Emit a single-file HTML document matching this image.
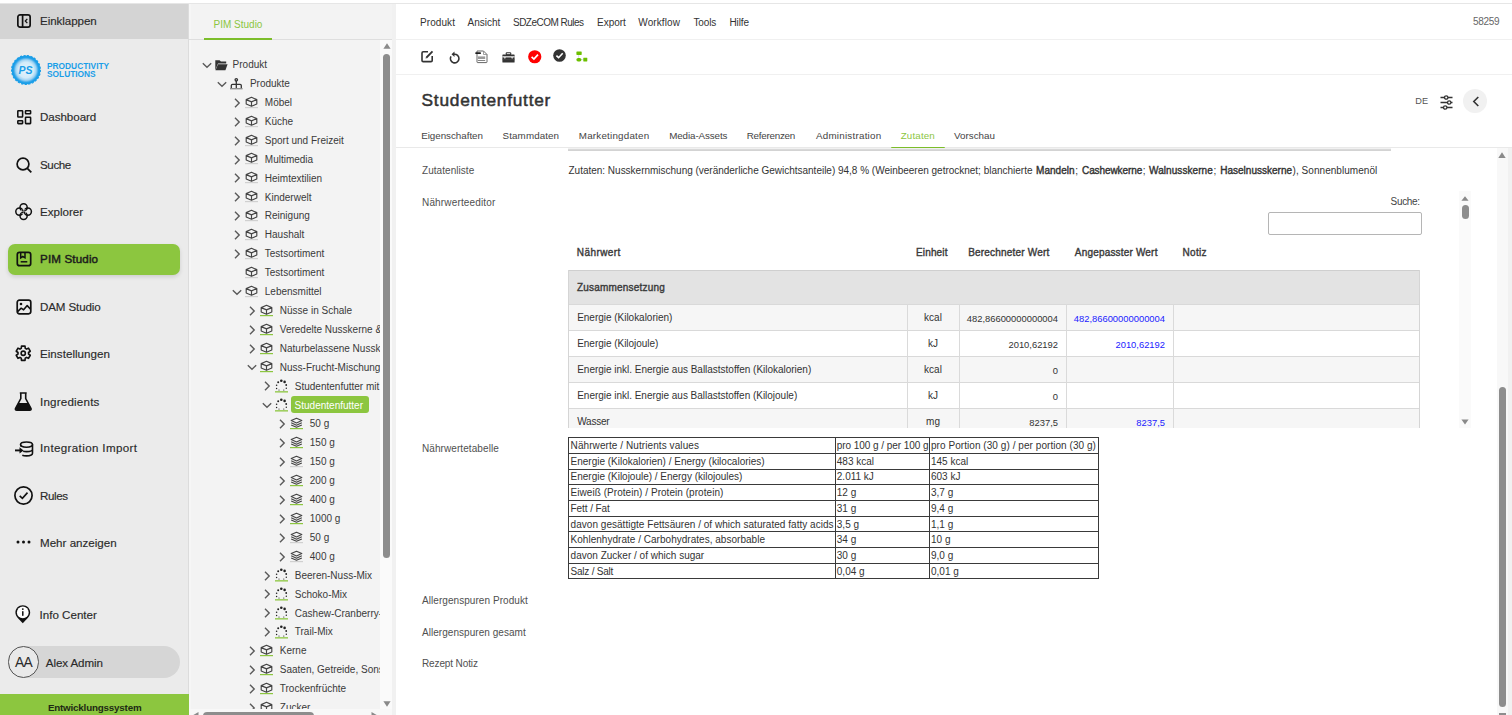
<!DOCTYPE html>
<html><head><meta charset="utf-8"><style>
html,body{margin:0;padding:0;width:1512px;height:715px;overflow:hidden;background:#fff;position:relative}
.t{position:absolute;white-space:nowrap;line-height:1;font-family:"Liberation Sans", sans-serif}
b{font-weight:bold}
svg{overflow:visible}
</style></head><body>
<div style="position:absolute;left:0px;top:0px;width:1512px;height:3px;background:#fff"></div><div style="position:absolute;left:0px;top:3px;width:1512px;height:1px;background:#e6e6e6"></div><div style="position:absolute;left:0px;top:4px;width:188px;height:711px;background:#ebebeb"></div><div style="position:absolute;left:188px;top:4px;width:1px;height:711px;background:#dcdcdc"></div><div style="position:absolute;left:0px;top:4px;width:188px;height:35px;background:#d4d4d4"></div><svg style="position:absolute;left:16.6px;top:14.1px" width="14" height="14" viewBox="0 0 14 14"><rect x="0.85" y="0.85" width="12.3" height="12.3" rx="2.2" fill="none" stroke="#111" stroke-width="1.7"/><line x1="5.6" y1="1" x2="5.6" y2="13" stroke="#111" stroke-width="1.7"/><path d="M10.3 4.9 L8.3 7 L10.3 9.1" fill="none" stroke="#111" stroke-width="1.3"/></svg><div class="t" style="left:40px;top:15.18px;font-size:11.6px;color:#2a2a2a;font-weight:normal;letter-spacing:-0.07px;-webkit-text-stroke:0.15px #2a2a2a">Einklappen</div><svg style="position:absolute;left:11px;top:55px" width="30" height="30" viewBox="0 0 30 30"><defs><radialGradient id="lg" cx="50%" cy="50%" r="50%"><stop offset="0%" stop-color="#e6f4fc"/><stop offset="55%" stop-color="#d2ebf9"/><stop offset="72%" stop-color="#9fd3f3"/><stop offset="85%" stop-color="#3aa9ea"/><stop offset="100%" stop-color="#1a9ee8"/></radialGradient></defs><circle cx="15" cy="15" r="14.2" fill="url(#lg)"/><circle cx="15" cy="15" r="14.4" fill="none" stroke="#1a9ee8" stroke-width="1.2" stroke-dasharray="2.2 1.4"/><circle cx="15" cy="15" r="13.4" fill="none" stroke="#1a9ee8" stroke-width="1.6"/><text x="14.6" y="18.8" text-anchor="middle" font-family="Liberation Sans" font-style="italic" font-weight="bold" font-size="10.5" fill="#1a9ee8">PS</text></svg><div class="t" style="left:46.8px;top:62.2px;font-size:9.6px;line-height:8px;font-weight:bold;color:#1a9ee8;transform:scaleX(0.87);transform-origin:0 0">PRODUCTIVITY<br>SOLUTIONS</div><div style="position:absolute;left:8px;top:243.5px;width:172px;height:31.5px;background:#8cc63f;border-radius:7px;box-shadow:0 2px 4px rgba(0,0,0,0.12)"></div><svg style="position:absolute;left:16.5px;top:110px" width="14.5" height="14.5" viewBox="0 0 14.5 14.5"><g fill="none" stroke="#111" stroke-width="1.55"><rect x="0.8" y="0.8" width="4.8" height="6.2" rx="0.5"/><rect x="8.5" y="0.8" width="5.1" height="3" rx="0.5"/><rect x="0.8" y="10.7" width="4.8" height="2.9" rx="0.5"/><rect x="8.5" y="7.3" width="5.1" height="6.3" rx="0.5"/></g></svg><div class="t" style="left:40px;top:111.18px;font-size:11.6px;color:#2a2a2a;font-weight:normal;letter-spacing:-0.05px;-webkit-text-stroke:0.15px #2a2a2a">Dashboard</div><svg style="position:absolute;left:15.5px;top:156.5px" width="17" height="17" viewBox="0 0 17 17"><circle cx="7" cy="7" r="5.9" fill="none" stroke="#111" stroke-width="1.7"/><line x1="11.3" y1="11.3" x2="15.3" y2="15.3" stroke="#111" stroke-width="1.8"/></svg><div class="t" style="left:40px;top:158.58px;font-size:11.6px;color:#2a2a2a;font-weight:normal;letter-spacing:-0.4px;-webkit-text-stroke:0.15px #2a2a2a">Suche</div><svg style="position:absolute;left:15px;top:203px" width="17" height="17" viewBox="0 0 17 17"><g fill="none" stroke-width="1.5"><circle cx="8.6" cy="4.3999999999999995" r="3.6" stroke="#111"/><circle cx="12.8" cy="8.6" r="3.6" stroke="#111"/><circle cx="8.6" cy="12.8" r="3.6" stroke="#111"/><circle cx="4.3999999999999995" cy="8.6" r="3.6" stroke="#111"/><path d="M8.60 8.00 A3.6 3.6 0 0 0 10.82 7.24" stroke="#ebebeb" stroke-width="2.6"/><path d="M8.60 8.00 A3.6 3.6 0 0 0 10.82 7.24" stroke="#111"/><path d="M9.20 8.60 A3.6 3.6 0 0 0 9.96 10.82" stroke="#ebebeb" stroke-width="2.6"/><path d="M9.20 8.60 A3.6 3.6 0 0 0 9.96 10.82" stroke="#111"/><path d="M8.60 9.20 A3.6 3.6 0 0 0 6.38 9.96" stroke="#ebebeb" stroke-width="2.6"/><path d="M8.60 9.20 A3.6 3.6 0 0 0 6.38 9.96" stroke="#111"/><path d="M8.00 8.60 A3.6 3.6 0 0 0 7.24 6.38" stroke="#ebebeb" stroke-width="2.6"/><path d="M8.00 8.60 A3.6 3.6 0 0 0 7.24 6.38" stroke="#111"/></g></svg><div class="t" style="left:40px;top:205.98px;font-size:11.6px;color:#2a2a2a;font-weight:normal;letter-spacing:0px;-webkit-text-stroke:0.15px #2a2a2a">Explorer</div><svg style="position:absolute;left:15.6px;top:251.3px" width="15.4" height="15.4" viewBox="0 0 15.4 15.4"><rect x="1.3" y="1.3" width="13.4" height="13.4" rx="2.3" fill="none" stroke="#111" stroke-width="1.7"/><path d="M4.7 1.5 V6.8 L6.8 5.5 L9 6.8 V1.5" fill="none" stroke="#111" stroke-width="1.5"/><line x1="4.7" y1="10.8" x2="11.3" y2="10.8" stroke="#111" stroke-width="1.5"/></svg><div class="t" style="left:40px;top:253.38px;font-size:11.6px;color:#1c1c1c;font-weight:normal;letter-spacing:0.15px;-webkit-text-stroke:0.45px #1c1c1c">PIM Studio</div><svg style="position:absolute;left:15.5px;top:298.5px" width="16" height="16" viewBox="0 0 16 16"><rect x="1.2" y="1.2" width="13.6" height="13.6" rx="2.2" fill="none" stroke="#111" stroke-width="1.7"/><circle cx="5" cy="5" r="1.3" fill="#111"/><path d="M1.6 12.6 L5.2 9.2 L7.6 10.8 L11.2 6.6 L14.6 10.2" fill="none" stroke="#111" stroke-width="1.6" stroke-linejoin="round"/></svg><div class="t" style="left:40px;top:300.78px;font-size:11.6px;color:#2a2a2a;font-weight:normal;letter-spacing:-0.12px;-webkit-text-stroke:0.15px #2a2a2a">DAM Studio</div><svg style="position:absolute;left:15.4px;top:345.3px" width="16.5" height="16.5" viewBox="0 0 16.5 16.5"><path d="M6.26 3.34 L6.48 1.17 L10.02 1.17 L10.24 3.34 L11.51 4.07 L13.50 3.18 L15.27 6.24 L13.50 7.51 L13.50 8.99 L15.27 10.26 L13.50 13.32 L11.51 12.43 L10.24 13.16 L10.02 15.33 L6.48 15.33 L6.26 13.16 L4.99 12.43 L3.00 13.32 L1.23 10.26 L3.00 8.99 L3.00 7.51 L1.23 6.24 L3.00 3.18 L4.99 4.07 Z" fill="none" stroke="#111" stroke-width="1.6" stroke-linejoin="round"/><circle cx="8.25" cy="8.25" r="2.1" fill="none" stroke="#111" stroke-width="1.6"/></svg><div class="t" style="left:40px;top:348.18px;font-size:11.6px;color:#2a2a2a;font-weight:normal;letter-spacing:0.03px;-webkit-text-stroke:0.15px #2a2a2a">Einstellungen</div><svg style="position:absolute;left:14.4px;top:391.5px" width="18.5" height="19" viewBox="0 0 18.5 19"><path d="M5.8 1 H12.7 M6.8 1 V6.5 L1.5 16.5 Q1 18.2 2.8 18.2 H15.7 Q17.5 18.2 17 16.5 L11.7 6.5 V1" fill="none" stroke="#111" stroke-width="1.6"/><path d="M4.3 11 H14.2 L17 16.6 Q17.4 18 15.7 18 H2.8 Q1.1 18 1.5 16.6 Z" fill="#111"/></svg><div class="t" style="left:40px;top:395.58px;font-size:11.6px;color:#2a2a2a;font-weight:normal;letter-spacing:0.2px;-webkit-text-stroke:0.15px #2a2a2a">Ingredients</div><svg style="position:absolute;left:13.9px;top:441px" width="19.6" height="16" viewBox="0 0 19.6 16"><ellipse cx="12.5" cy="3.6" rx="6" ry="2.6" fill="none" stroke="#111" stroke-width="1.6"/><path d="M18.5 3.6 V12.3 Q18.5 14.9 12.5 14.9 Q9.8 14.9 8.3 14.3 M18.5 8.2 Q18.5 10.5 12.5 10.6 Q10.2 10.6 9.2 10.2 M6.8 3.8 V5.5" fill="none" stroke="#111" stroke-width="1.6"/><path d="M1 9.4 H6" stroke="#111" stroke-width="1.9"/><path d="M5.5 6.2 L9.6 9.4 L5.5 12.6 Z" fill="#111"/></svg><div class="t" style="left:40px;top:442.38px;font-size:11.6px;color:#2a2a2a;font-weight:normal;letter-spacing:0.36px;-webkit-text-stroke:0.15px #2a2a2a">Integration Import</div><svg style="position:absolute;left:13.9px;top:486px" width="19" height="19" viewBox="0 0 19 19"><circle cx="9.5" cy="9.5" r="8.6" fill="none" stroke="#111" stroke-width="1.7"/><path d="M5.7 9.8 L8.4 12.4 L13.5 6.6" fill="none" stroke="#111" stroke-width="1.6"/></svg><div class="t" style="left:40px;top:490.38px;font-size:11.6px;color:#2a2a2a;font-weight:normal;letter-spacing:-0.4px;-webkit-text-stroke:0.15px #2a2a2a">Rules</div><svg style="position:absolute;left:15.5px;top:534px" width="16" height="16" viewBox="0 0 16 16"><circle cx="2" cy="8" r="1.5" fill="#111"/><circle cx="7.5" cy="8" r="1.5" fill="#111"/><circle cx="13" cy="8" r="1.5" fill="#111"/></svg><div class="t" style="left:40px;top:537.18px;font-size:11.6px;color:#2a2a2a;font-weight:normal;letter-spacing:0px;-webkit-text-stroke:0.15px #2a2a2a">Mehr anzeigen</div><svg style="position:absolute;left:15.4px;top:605.4px" width="15.6" height="18.4" viewBox="0 0 15.6 18.4"><path d="M7.8 0.3 C3.6 0.3 0.4 3.5 0.4 7.5 C0.4 11.3 3.8 13.9 7.8 18.2 C11.8 13.9 15.2 11.3 15.2 7.5 C15.2 3.5 12 0.3 7.8 0.3 Z" fill="#111"/><circle cx="7.8" cy="7.4" r="5.9" fill="#fff"/><rect x="7.05" y="6" width="1.5" height="5" rx="0.75" fill="#111"/><circle cx="7.8" cy="4.1" r="0.95" fill="#111"/></svg><div class="t" style="left:39.5px;top:608.78px;font-size:11.6px;color:#2a2a2a;font-weight:normal;-webkit-text-stroke:0.15px #2a2a2a">Info Center</div><div style="position:absolute;left:8px;top:646px;width:172px;height:32px;background:#d6d6d6;border-radius:16px"></div><div style="position:absolute;left:7.8px;top:646.3px;width:31.5px;height:31.5px;box-sizing:border-box;border:1.2px solid #555;border-radius:50%;background:#e9e9e9"></div><div class="t" style="left:-176.4px;width:400px;text-align:center;top:655.72px;font-size:13.8px;color:#2a2a2a;font-weight:normal;letter-spacing:-0.6px">AA</div><div class="t" style="left:45.8px;top:656.78px;font-size:11.6px;color:#2a2a2a;font-weight:normal;letter-spacing:-0.1px;-webkit-text-stroke:0.15px #2a2a2a">Alex Admin</div><div style="position:absolute;left:0px;top:693.5px;width:189px;height:21.5px;background:#8cc63f"></div><div class="t" style="left:47.9px;top:702.90px;font-size:9.8px;color:#1e2a14;font-weight:bold;letter-spacing:-0.186px;">Entwicklungssystem</div><div style="position:absolute;left:189px;top:4px;width:203px;height:711px;background:#f3f3f3"></div><div style="position:absolute;left:189px;top:4px;width:2px;height:711px;background:#f6f6f6"></div><div style="position:absolute;left:392px;top:4px;width:4px;height:711px;background:#f1f1f1"></div><div class="t" style="left:213.5px;top:20.14px;font-size:10px;color:#8cc63f;font-weight:normal;">PIM Studio</div><div style="position:absolute;left:189px;top:39px;width:203px;height:1px;background:#dedede"></div><div style="position:absolute;left:204px;top:38px;width:67.5px;height:2px;background:#7cbd2a"></div><div style="position:absolute;left:380px;top:40px;width:12px;height:669px;background:#fafafa"></div><svg style="position:absolute;left:382.5px;top:43px" width="8" height="6" viewBox="0 0 8 6"><path d="M4 0.3 L7.6 5.7 H0.4 Z" fill="#8a8a8a"/></svg><div style="position:absolute;left:382.7px;top:53.5px;width:7.3px;height:504px;background:#8d8d8d;border-radius:4px"></div><svg style="position:absolute;left:382.5px;top:701px" width="8" height="6" viewBox="0 0 8 6"><path d="M0.4 0.3 H7.6 L4 5.7 Z" fill="#8a8a8a"/></svg><div style="position:absolute;left:189px;top:709px;width:203px;height:6px;background:#f8f8f8"></div><div style="position:absolute;left:203.3px;top:712px;width:111px;height:8px;background:#8d8d8d;border-radius:4px"></div><svg style="position:absolute;left:193px;top:710px" width="6" height="6" viewBox="0 0 6 6"><path d="M0.3 5 L5.5 2 V8 Z" fill="#8a8a8a"/></svg><svg style="position:absolute;left:371px;top:710px" width="6" height="6" viewBox="0 0 6 6"><path d="M5.7 5 L0.5 2 V8 Z" fill="#8a8a8a"/></svg><div style="position:absolute;left:189px;top:40px;width:191px;height:669px;overflow:hidden"><div style="position:absolute;left:0;top:-40px;width:400px;height:800px"><svg style="position:absolute;left:13.300000000000011px;top:61.79999999999999px" width="10" height="6.5" viewBox="0 0 10 6.5"><path d="M0.8 1.2 L5 5.2 L9.2 1.2" fill="none" stroke="#5a5a5a" stroke-width="1.4"/></svg><svg style="position:absolute;left:25.900000000000006px;top:58.89999999999999px" width="14" height="12" viewBox="0 0 14 12"><path d="M0.3 1.2 H4.6 L5.9 2.6 H11.2 V4.6 H3 L0.3 11.2 Z" fill="#333"/><path d="M3 5.2 H12.6 L10.4 11.2 H0.5 Z" fill="#333"/></svg><div class="t" style="left:43.599999999999994px;top:60.13px;font-size:10px;color:#3a3a3a;font-weight:normal;">Produkt</div><svg style="position:absolute;left:28.30000000000001px;top:80.71px" width="10" height="6.5" viewBox="0 0 10 6.5"><path d="M0.8 1.2 L5 5.2 L9.2 1.2" fill="none" stroke="#5a5a5a" stroke-width="1.4"/></svg><svg style="position:absolute;left:40.900000000000006px;top:77.60999999999999px" width="13" height="12" viewBox="0 0 13 12"><g fill="none" stroke="#333" stroke-width="1.3"><circle cx="6.3" cy="1.8" r="1.2"/><path d="M6.3 3 V10 M1.3 10 V7.6 Q1.3 6.4 2.5 6.4 H10.1 Q11.3 6.4 11.3 7.6 V10"/></g><rect x="0" y="10.2" width="12.6" height="1.1" fill="#777"/></svg><div class="t" style="left:60.900000000000006px;top:79.04px;font-size:10px;color:#3a3a3a;font-weight:normal;">Produkte</div><svg style="position:absolute;left:44.5px;top:97.81999999999998px" width="7" height="10" viewBox="0 0 7 10"><path d="M1 0.8 L5.2 5 L1 9.2" fill="none" stroke="#5a5a5a" stroke-width="1.4"/></svg><svg style="position:absolute;left:55.900000000000006px;top:95.71999999999998px" width="13" height="14" viewBox="0 0 13 14"><path d="M6.5 1.3 L11.8 3.6 V8 L6.5 10.3 L1.2 8 V3.6 Z M1.2 3.6 L6.5 5.9 L11.8 3.6 M6.5 5.9 V10.3" fill="none" stroke="#444" stroke-width="1.15" stroke-linejoin="round"/><rect x="0" y="11" width="13" height="1.2" fill="#d0d0d0"/></svg><div class="t" style="left:75.80000000000001px;top:97.95px;font-size:10px;color:#3a3a3a;font-weight:normal;">Möbel</div><svg style="position:absolute;left:44.5px;top:116.72999999999999px" width="7" height="10" viewBox="0 0 7 10"><path d="M1 0.8 L5.2 5 L1 9.2" fill="none" stroke="#5a5a5a" stroke-width="1.4"/></svg><svg style="position:absolute;left:55.900000000000006px;top:114.63px" width="13" height="14" viewBox="0 0 13 14"><path d="M6.5 1.3 L11.8 3.6 V8 L6.5 10.3 L1.2 8 V3.6 Z M1.2 3.6 L6.5 5.9 L11.8 3.6 M6.5 5.9 V10.3" fill="none" stroke="#444" stroke-width="1.15" stroke-linejoin="round"/><rect x="0" y="11" width="13" height="1.2" fill="#d0d0d0"/></svg><div class="t" style="left:75.80000000000001px;top:116.86px;font-size:10px;color:#3a3a3a;font-weight:normal;">Küche</div><svg style="position:absolute;left:44.5px;top:135.64000000000001px" width="7" height="10" viewBox="0 0 7 10"><path d="M1 0.8 L5.2 5 L1 9.2" fill="none" stroke="#5a5a5a" stroke-width="1.4"/></svg><svg style="position:absolute;left:55.900000000000006px;top:133.54000000000002px" width="13" height="14" viewBox="0 0 13 14"><path d="M6.5 1.3 L11.8 3.6 V8 L6.5 10.3 L1.2 8 V3.6 Z M1.2 3.6 L6.5 5.9 L11.8 3.6 M6.5 5.9 V10.3" fill="none" stroke="#444" stroke-width="1.15" stroke-linejoin="round"/><rect x="0" y="11" width="13" height="1.2" fill="#d0d0d0"/></svg><div class="t" style="left:75.80000000000001px;top:135.78px;font-size:10px;color:#3a3a3a;font-weight:normal;">Sport und Freizeit</div><svg style="position:absolute;left:44.5px;top:154.54999999999998px" width="7" height="10" viewBox="0 0 7 10"><path d="M1 0.8 L5.2 5 L1 9.2" fill="none" stroke="#5a5a5a" stroke-width="1.4"/></svg><svg style="position:absolute;left:55.900000000000006px;top:152.45px" width="13" height="14" viewBox="0 0 13 14"><path d="M6.5 1.3 L11.8 3.6 V8 L6.5 10.3 L1.2 8 V3.6 Z M1.2 3.6 L6.5 5.9 L11.8 3.6 M6.5 5.9 V10.3" fill="none" stroke="#444" stroke-width="1.15" stroke-linejoin="round"/><rect x="0" y="11" width="13" height="1.2" fill="#d0d0d0"/></svg><div class="t" style="left:75.80000000000001px;top:154.68px;font-size:10px;color:#3a3a3a;font-weight:normal;">Multimedia</div><svg style="position:absolute;left:44.5px;top:173.46px" width="7" height="10" viewBox="0 0 7 10"><path d="M1 0.8 L5.2 5 L1 9.2" fill="none" stroke="#5a5a5a" stroke-width="1.4"/></svg><svg style="position:absolute;left:55.900000000000006px;top:171.36px" width="13" height="14" viewBox="0 0 13 14"><path d="M6.5 1.3 L11.8 3.6 V8 L6.5 10.3 L1.2 8 V3.6 Z M1.2 3.6 L6.5 5.9 L11.8 3.6 M6.5 5.9 V10.3" fill="none" stroke="#444" stroke-width="1.15" stroke-linejoin="round"/><rect x="0" y="11" width="13" height="1.2" fill="#d0d0d0"/></svg><div class="t" style="left:75.80000000000001px;top:173.59px;font-size:10px;color:#3a3a3a;font-weight:normal;">Heimtextilien</div><svg style="position:absolute;left:44.5px;top:192.37px" width="7" height="10" viewBox="0 0 7 10"><path d="M1 0.8 L5.2 5 L1 9.2" fill="none" stroke="#5a5a5a" stroke-width="1.4"/></svg><svg style="position:absolute;left:55.900000000000006px;top:190.27px" width="13" height="14" viewBox="0 0 13 14"><path d="M6.5 1.3 L11.8 3.6 V8 L6.5 10.3 L1.2 8 V3.6 Z M1.2 3.6 L6.5 5.9 L11.8 3.6 M6.5 5.9 V10.3" fill="none" stroke="#444" stroke-width="1.15" stroke-linejoin="round"/><rect x="0" y="11" width="13" height="1.2" fill="#d0d0d0"/></svg><div class="t" style="left:75.80000000000001px;top:192.50px;font-size:10px;color:#3a3a3a;font-weight:normal;">Kinderwelt</div><svg style="position:absolute;left:44.5px;top:211.28px" width="7" height="10" viewBox="0 0 7 10"><path d="M1 0.8 L5.2 5 L1 9.2" fill="none" stroke="#5a5a5a" stroke-width="1.4"/></svg><svg style="position:absolute;left:55.900000000000006px;top:209.18px" width="13" height="14" viewBox="0 0 13 14"><path d="M6.5 1.3 L11.8 3.6 V8 L6.5 10.3 L1.2 8 V3.6 Z M1.2 3.6 L6.5 5.9 L11.8 3.6 M6.5 5.9 V10.3" fill="none" stroke="#444" stroke-width="1.15" stroke-linejoin="round"/><rect x="0" y="11" width="13" height="1.2" fill="#d0d0d0"/></svg><div class="t" style="left:75.80000000000001px;top:211.41px;font-size:10px;color:#3a3a3a;font-weight:normal;">Reinigung</div><svg style="position:absolute;left:44.5px;top:230.19px" width="7" height="10" viewBox="0 0 7 10"><path d="M1 0.8 L5.2 5 L1 9.2" fill="none" stroke="#5a5a5a" stroke-width="1.4"/></svg><svg style="position:absolute;left:55.900000000000006px;top:228.09px" width="13" height="14" viewBox="0 0 13 14"><path d="M6.5 1.3 L11.8 3.6 V8 L6.5 10.3 L1.2 8 V3.6 Z M1.2 3.6 L6.5 5.9 L11.8 3.6 M6.5 5.9 V10.3" fill="none" stroke="#444" stroke-width="1.15" stroke-linejoin="round"/><rect x="0" y="11" width="13" height="1.2" fill="#d0d0d0"/></svg><div class="t" style="left:75.80000000000001px;top:230.32px;font-size:10px;color:#3a3a3a;font-weight:normal;">Haushalt</div><svg style="position:absolute;left:44.5px;top:249.1px" width="7" height="10" viewBox="0 0 7 10"><path d="M1 0.8 L5.2 5 L1 9.2" fill="none" stroke="#5a5a5a" stroke-width="1.4"/></svg><svg style="position:absolute;left:55.900000000000006px;top:247.0px" width="13" height="14" viewBox="0 0 13 14"><path d="M6.5 1.3 L11.8 3.6 V8 L6.5 10.3 L1.2 8 V3.6 Z M1.2 3.6 L6.5 5.9 L11.8 3.6 M6.5 5.9 V10.3" fill="none" stroke="#444" stroke-width="1.15" stroke-linejoin="round"/><rect x="0" y="11" width="13" height="1.2" fill="#d0d0d0"/></svg><div class="t" style="left:75.80000000000001px;top:249.23px;font-size:10px;color:#3a3a3a;font-weight:normal;">Testsortiment</div><svg style="position:absolute;left:55.900000000000006px;top:265.91px" width="13" height="14" viewBox="0 0 13 14"><path d="M6.5 1.3 L11.8 3.6 V8 L6.5 10.3 L1.2 8 V3.6 Z M1.2 3.6 L6.5 5.9 L11.8 3.6 M6.5 5.9 V10.3" fill="none" stroke="#444" stroke-width="1.15" stroke-linejoin="round"/><rect x="0" y="11" width="13" height="1.2" fill="#d0d0d0"/></svg><div class="t" style="left:75.80000000000001px;top:268.15px;font-size:10px;color:#3a3a3a;font-weight:normal;">Testsortiment</div><svg style="position:absolute;left:43.30000000000001px;top:288.71999999999997px" width="10" height="6.5" viewBox="0 0 10 6.5"><path d="M0.8 1.2 L5 5.2 L9.2 1.2" fill="none" stroke="#5a5a5a" stroke-width="1.4"/></svg><svg style="position:absolute;left:55.900000000000006px;top:284.82px" width="13" height="14" viewBox="0 0 13 14"><path d="M6.5 1.3 L11.8 3.6 V8 L6.5 10.3 L1.2 8 V3.6 Z M1.2 3.6 L6.5 5.9 L11.8 3.6 M6.5 5.9 V10.3" fill="none" stroke="#444" stroke-width="1.15" stroke-linejoin="round"/><rect x="0" y="11" width="13" height="1.2" fill="#d0d0d0"/></svg><div class="t" style="left:75.80000000000001px;top:287.06px;font-size:10px;color:#3a3a3a;font-weight:normal;">Lebensmittel</div><svg style="position:absolute;left:59.5px;top:305.83000000000004px" width="7" height="10" viewBox="0 0 7 10"><path d="M1 0.8 L5.2 5 L1 9.2" fill="none" stroke="#5a5a5a" stroke-width="1.4"/></svg><svg style="position:absolute;left:70.90000000000003px;top:303.73px" width="13" height="14" viewBox="0 0 13 14"><path d="M6.5 1.3 L11.8 3.6 V8 L6.5 10.3 L1.2 8 V3.6 Z M1.2 3.6 L6.5 5.9 L11.8 3.6 M6.5 5.9 V10.3" fill="none" stroke="#444" stroke-width="1.15" stroke-linejoin="round"/><rect x="0" y="11" width="13" height="1.2" fill="#8cc63f"/></svg><div class="t" style="left:90.80000000000001px;top:305.97px;font-size:10px;color:#3a3a3a;font-weight:normal;">Nüsse in Schale</div><svg style="position:absolute;left:59.5px;top:324.74000000000007px" width="7" height="10" viewBox="0 0 7 10"><path d="M1 0.8 L5.2 5 L1 9.2" fill="none" stroke="#5a5a5a" stroke-width="1.4"/></svg><svg style="position:absolute;left:70.90000000000003px;top:322.64000000000004px" width="13" height="14" viewBox="0 0 13 14"><path d="M6.5 1.3 L11.8 3.6 V8 L6.5 10.3 L1.2 8 V3.6 Z M1.2 3.6 L6.5 5.9 L11.8 3.6 M6.5 5.9 V10.3" fill="none" stroke="#444" stroke-width="1.15" stroke-linejoin="round"/><rect x="0" y="11" width="13" height="1.2" fill="#8cc63f"/></svg><div class="t" style="left:90.80000000000001px;top:324.88px;font-size:10px;color:#3a3a3a;font-weight:normal;">Veredelte Nusskerne &amp; Trockenfrüchte</div><svg style="position:absolute;left:59.5px;top:343.65000000000003px" width="7" height="10" viewBox="0 0 7 10"><path d="M1 0.8 L5.2 5 L1 9.2" fill="none" stroke="#5a5a5a" stroke-width="1.4"/></svg><svg style="position:absolute;left:70.90000000000003px;top:341.55px" width="13" height="14" viewBox="0 0 13 14"><path d="M6.5 1.3 L11.8 3.6 V8 L6.5 10.3 L1.2 8 V3.6 Z M1.2 3.6 L6.5 5.9 L11.8 3.6 M6.5 5.9 V10.3" fill="none" stroke="#444" stroke-width="1.15" stroke-linejoin="round"/><rect x="0" y="11" width="13" height="1.2" fill="#8cc63f"/></svg><div class="t" style="left:90.80000000000001px;top:343.79px;font-size:10px;color:#3a3a3a;font-weight:normal;">Naturbelassene Nusskerne</div><svg style="position:absolute;left:58.30000000000001px;top:364.35999999999996px" width="10" height="6.5" viewBox="0 0 10 6.5"><path d="M0.8 1.2 L5 5.2 L9.2 1.2" fill="none" stroke="#5a5a5a" stroke-width="1.4"/></svg><svg style="position:absolute;left:70.90000000000003px;top:360.46px" width="13" height="14" viewBox="0 0 13 14"><path d="M6.5 1.3 L11.8 3.6 V8 L6.5 10.3 L1.2 8 V3.6 Z M1.2 3.6 L6.5 5.9 L11.8 3.6 M6.5 5.9 V10.3" fill="none" stroke="#444" stroke-width="1.15" stroke-linejoin="round"/><rect x="0" y="11" width="13" height="1.2" fill="#8cc63f"/></svg><div class="t" style="left:90.80000000000001px;top:362.69px;font-size:10px;color:#3a3a3a;font-weight:normal;">Nuss-Frucht-Mischungen</div><svg style="position:absolute;left:74.5px;top:381.4700000000001px" width="7" height="10" viewBox="0 0 7 10"><path d="M1 0.8 L5.2 5 L1 9.2" fill="none" stroke="#5a5a5a" stroke-width="1.4"/></svg><svg style="position:absolute;left:85.90000000000003px;top:379.37000000000006px" width="13" height="14" viewBox="0 0 13 14"><g fill="#222"><circle cx="6.3" cy="1.7" r="1.3"/><circle cx="9.6" cy="2.9" r="1.3"/><circle cx="3.2" cy="3.2" r="1.0"/><circle cx="11.2" cy="6.0" r="0.9"/><circle cx="1.6" cy="6.2" r="0.8"/><circle cx="11.3" cy="9.3" r="0.7"/><circle cx="1.6" cy="9.5" r="0.7"/><circle cx="4" cy="11" r="0.6"/><circle cx="8.8" cy="11" r="0.6"/></g><rect x="0" y="12.2" width="13" height="1.3" fill="#8cc63f"/></svg><div class="t" style="left:105.80000000000001px;top:381.61px;font-size:10px;color:#3a3a3a;font-weight:normal;">Studentenfutter mit Schokolade</div><svg style="position:absolute;left:73.30000000000001px;top:402.18px" width="10" height="6.5" viewBox="0 0 10 6.5"><path d="M0.8 1.2 L5 5.2 L9.2 1.2" fill="none" stroke="#5a5a5a" stroke-width="1.4"/></svg><svg style="position:absolute;left:85.90000000000003px;top:398.28000000000003px" width="13" height="14" viewBox="0 0 13 14"><g fill="#222"><circle cx="6.3" cy="1.7" r="1.3"/><circle cx="9.6" cy="2.9" r="1.3"/><circle cx="3.2" cy="3.2" r="1.0"/><circle cx="11.2" cy="6.0" r="0.9"/><circle cx="1.6" cy="6.2" r="0.8"/><circle cx="11.3" cy="9.3" r="0.7"/><circle cx="1.6" cy="9.5" r="0.7"/><circle cx="4" cy="11" r="0.6"/><circle cx="8.8" cy="11" r="0.6"/></g><rect x="0" y="12.2" width="13" height="1.3" fill="#8cc63f"/></svg><div style="position:absolute;left:101.69999999999999px;top:396px;width:78.5px;height:16.7px;background:#8cc63f;border-radius:3px"></div><div class="t" style="left:105.60000000000002px;top:400.52px;font-size:10px;color:#fff;font-weight:normal;">Studentenfutter</div><svg style="position:absolute;left:89.5px;top:419.29px" width="7" height="10" viewBox="0 0 7 10"><path d="M1 0.8 L5.2 5 L1 9.2" fill="none" stroke="#5a5a5a" stroke-width="1.4"/></svg><svg style="position:absolute;left:100.90000000000003px;top:417.19px" width="13" height="14" viewBox="0 0 13 14"><g fill="none" stroke="#444" stroke-width="1.1" stroke-linejoin="round"><path d="M6.5 1.2 L11.8 3.6 L6.5 6 L1.2 3.6 Z"/><path d="M1.2 5.8 L6.5 8.2 L11.8 5.8"/><path d="M1.2 7.9 L6.5 10.3 L11.8 7.9"/></g><rect x="0" y="11" width="13" height="1.2" fill="#8cc63f"/></svg><div class="t" style="left:120.80000000000001px;top:419.43px;font-size:10px;color:#3a3a3a;font-weight:normal;">50 g</div><svg style="position:absolute;left:89.5px;top:438.2px" width="7" height="10" viewBox="0 0 7 10"><path d="M1 0.8 L5.2 5 L1 9.2" fill="none" stroke="#5a5a5a" stroke-width="1.4"/></svg><svg style="position:absolute;left:100.90000000000003px;top:436.09999999999997px" width="13" height="14" viewBox="0 0 13 14"><g fill="none" stroke="#444" stroke-width="1.1" stroke-linejoin="round"><path d="M6.5 1.2 L11.8 3.6 L6.5 6 L1.2 3.6 Z"/><path d="M1.2 5.8 L6.5 8.2 L11.8 5.8"/><path d="M1.2 7.9 L6.5 10.3 L11.8 7.9"/></g><rect x="0" y="11" width="13" height="1.2" fill="#8cc63f"/></svg><div class="t" style="left:120.80000000000001px;top:438.33px;font-size:10px;color:#3a3a3a;font-weight:normal;">150 g</div><svg style="position:absolute;left:89.5px;top:457.11000000000007px" width="7" height="10" viewBox="0 0 7 10"><path d="M1 0.8 L5.2 5 L1 9.2" fill="none" stroke="#5a5a5a" stroke-width="1.4"/></svg><svg style="position:absolute;left:100.90000000000003px;top:455.01000000000005px" width="13" height="14" viewBox="0 0 13 14"><g fill="none" stroke="#444" stroke-width="1.1" stroke-linejoin="round"><path d="M6.5 1.2 L11.8 3.6 L6.5 6 L1.2 3.6 Z"/><path d="M1.2 5.8 L6.5 8.2 L11.8 5.8"/><path d="M1.2 7.9 L6.5 10.3 L11.8 7.9"/></g><rect x="0" y="11" width="13" height="1.2" fill="#d0d0d0"/></svg><div class="t" style="left:120.80000000000001px;top:457.25px;font-size:10px;color:#3a3a3a;font-weight:normal;">150 g</div><svg style="position:absolute;left:89.5px;top:476.02000000000004px" width="7" height="10" viewBox="0 0 7 10"><path d="M1 0.8 L5.2 5 L1 9.2" fill="none" stroke="#5a5a5a" stroke-width="1.4"/></svg><svg style="position:absolute;left:100.90000000000003px;top:473.92px" width="13" height="14" viewBox="0 0 13 14"><g fill="none" stroke="#444" stroke-width="1.1" stroke-linejoin="round"><path d="M6.5 1.2 L11.8 3.6 L6.5 6 L1.2 3.6 Z"/><path d="M1.2 5.8 L6.5 8.2 L11.8 5.8"/><path d="M1.2 7.9 L6.5 10.3 L11.8 7.9"/></g><rect x="0" y="11" width="13" height="1.2" fill="#8cc63f"/></svg><div class="t" style="left:120.80000000000001px;top:476.16px;font-size:10px;color:#3a3a3a;font-weight:normal;">200 g</div><svg style="position:absolute;left:89.5px;top:494.93px" width="7" height="10" viewBox="0 0 7 10"><path d="M1 0.8 L5.2 5 L1 9.2" fill="none" stroke="#5a5a5a" stroke-width="1.4"/></svg><svg style="position:absolute;left:100.90000000000003px;top:492.83px" width="13" height="14" viewBox="0 0 13 14"><g fill="none" stroke="#444" stroke-width="1.1" stroke-linejoin="round"><path d="M6.5 1.2 L11.8 3.6 L6.5 6 L1.2 3.6 Z"/><path d="M1.2 5.8 L6.5 8.2 L11.8 5.8"/><path d="M1.2 7.9 L6.5 10.3 L11.8 7.9"/></g><rect x="0" y="11" width="13" height="1.2" fill="#8cc63f"/></svg><div class="t" style="left:120.80000000000001px;top:495.06px;font-size:10px;color:#3a3a3a;font-weight:normal;">400 g</div><svg style="position:absolute;left:89.5px;top:513.84px" width="7" height="10" viewBox="0 0 7 10"><path d="M1 0.8 L5.2 5 L1 9.2" fill="none" stroke="#5a5a5a" stroke-width="1.4"/></svg><svg style="position:absolute;left:100.90000000000003px;top:511.74px" width="13" height="14" viewBox="0 0 13 14"><g fill="none" stroke="#444" stroke-width="1.1" stroke-linejoin="round"><path d="M6.5 1.2 L11.8 3.6 L6.5 6 L1.2 3.6 Z"/><path d="M1.2 5.8 L6.5 8.2 L11.8 5.8"/><path d="M1.2 7.9 L6.5 10.3 L11.8 7.9"/></g><rect x="0" y="11" width="13" height="1.2" fill="#8cc63f"/></svg><div class="t" style="left:120.80000000000001px;top:513.98px;font-size:10px;color:#3a3a3a;font-weight:normal;">1000 g</div><svg style="position:absolute;left:89.5px;top:532.75px" width="7" height="10" viewBox="0 0 7 10"><path d="M1 0.8 L5.2 5 L1 9.2" fill="none" stroke="#5a5a5a" stroke-width="1.4"/></svg><svg style="position:absolute;left:100.90000000000003px;top:530.65px" width="13" height="14" viewBox="0 0 13 14"><g fill="none" stroke="#444" stroke-width="1.1" stroke-linejoin="round"><path d="M6.5 1.2 L11.8 3.6 L6.5 6 L1.2 3.6 Z"/><path d="M1.2 5.8 L6.5 8.2 L11.8 5.8"/><path d="M1.2 7.9 L6.5 10.3 L11.8 7.9"/></g><rect x="0" y="11" width="13" height="1.2" fill="#d0d0d0"/></svg><div class="t" style="left:120.80000000000001px;top:532.88px;font-size:10px;color:#3a3a3a;font-weight:normal;">50 g</div><svg style="position:absolute;left:89.5px;top:551.66px" width="7" height="10" viewBox="0 0 7 10"><path d="M1 0.8 L5.2 5 L1 9.2" fill="none" stroke="#5a5a5a" stroke-width="1.4"/></svg><svg style="position:absolute;left:100.90000000000003px;top:549.56px" width="13" height="14" viewBox="0 0 13 14"><g fill="none" stroke="#444" stroke-width="1.1" stroke-linejoin="round"><path d="M6.5 1.2 L11.8 3.6 L6.5 6 L1.2 3.6 Z"/><path d="M1.2 5.8 L6.5 8.2 L11.8 5.8"/><path d="M1.2 7.9 L6.5 10.3 L11.8 7.9"/></g><rect x="0" y="11" width="13" height="1.2" fill="#d0d0d0"/></svg><div class="t" style="left:120.80000000000001px;top:551.79px;font-size:10px;color:#3a3a3a;font-weight:normal;">400 g</div><svg style="position:absolute;left:74.5px;top:570.5699999999999px" width="7" height="10" viewBox="0 0 7 10"><path d="M1 0.8 L5.2 5 L1 9.2" fill="none" stroke="#5a5a5a" stroke-width="1.4"/></svg><svg style="position:absolute;left:85.90000000000003px;top:568.4699999999999px" width="13" height="14" viewBox="0 0 13 14"><g fill="#222"><circle cx="6.3" cy="1.7" r="1.3"/><circle cx="9.6" cy="2.9" r="1.3"/><circle cx="3.2" cy="3.2" r="1.0"/><circle cx="11.2" cy="6.0" r="0.9"/><circle cx="1.6" cy="6.2" r="0.8"/><circle cx="11.3" cy="9.3" r="0.7"/><circle cx="1.6" cy="9.5" r="0.7"/><circle cx="4" cy="11" r="0.6"/><circle cx="8.8" cy="11" r="0.6"/></g><rect x="0" y="12.2" width="13" height="1.3" fill="#8cc63f"/></svg><div class="t" style="left:105.80000000000001px;top:570.70px;font-size:10px;color:#3a3a3a;font-weight:normal;">Beeren-Nuss-Mix</div><svg style="position:absolute;left:74.5px;top:589.48px" width="7" height="10" viewBox="0 0 7 10"><path d="M1 0.8 L5.2 5 L1 9.2" fill="none" stroke="#5a5a5a" stroke-width="1.4"/></svg><svg style="position:absolute;left:85.90000000000003px;top:587.38px" width="13" height="14" viewBox="0 0 13 14"><g fill="#222"><circle cx="6.3" cy="1.7" r="1.3"/><circle cx="9.6" cy="2.9" r="1.3"/><circle cx="3.2" cy="3.2" r="1.0"/><circle cx="11.2" cy="6.0" r="0.9"/><circle cx="1.6" cy="6.2" r="0.8"/><circle cx="11.3" cy="9.3" r="0.7"/><circle cx="1.6" cy="9.5" r="0.7"/><circle cx="4" cy="11" r="0.6"/><circle cx="8.8" cy="11" r="0.6"/></g><rect x="0" y="12.2" width="13" height="1.3" fill="#8cc63f"/></svg><div class="t" style="left:105.80000000000001px;top:589.62px;font-size:10px;color:#3a3a3a;font-weight:normal;">Schoko-Mix</div><svg style="position:absolute;left:74.5px;top:608.39px" width="7" height="10" viewBox="0 0 7 10"><path d="M1 0.8 L5.2 5 L1 9.2" fill="none" stroke="#5a5a5a" stroke-width="1.4"/></svg><svg style="position:absolute;left:85.90000000000003px;top:606.29px" width="13" height="14" viewBox="0 0 13 14"><g fill="#222"><circle cx="6.3" cy="1.7" r="1.3"/><circle cx="9.6" cy="2.9" r="1.3"/><circle cx="3.2" cy="3.2" r="1.0"/><circle cx="11.2" cy="6.0" r="0.9"/><circle cx="1.6" cy="6.2" r="0.8"/><circle cx="11.3" cy="9.3" r="0.7"/><circle cx="1.6" cy="9.5" r="0.7"/><circle cx="4" cy="11" r="0.6"/><circle cx="8.8" cy="11" r="0.6"/></g><rect x="0" y="12.2" width="13" height="1.3" fill="#8cc63f"/></svg><div class="t" style="left:105.80000000000001px;top:608.52px;font-size:10px;color:#3a3a3a;font-weight:normal;">Cashew-Cranberry-Mix</div><svg style="position:absolute;left:74.5px;top:627.3px" width="7" height="10" viewBox="0 0 7 10"><path d="M1 0.8 L5.2 5 L1 9.2" fill="none" stroke="#5a5a5a" stroke-width="1.4"/></svg><svg style="position:absolute;left:85.90000000000003px;top:625.1999999999999px" width="13" height="14" viewBox="0 0 13 14"><g fill="#222"><circle cx="6.3" cy="1.7" r="1.3"/><circle cx="9.6" cy="2.9" r="1.3"/><circle cx="3.2" cy="3.2" r="1.0"/><circle cx="11.2" cy="6.0" r="0.9"/><circle cx="1.6" cy="6.2" r="0.8"/><circle cx="11.3" cy="9.3" r="0.7"/><circle cx="1.6" cy="9.5" r="0.7"/><circle cx="4" cy="11" r="0.6"/><circle cx="8.8" cy="11" r="0.6"/></g><rect x="0" y="12.2" width="13" height="1.3" fill="#8cc63f"/></svg><div class="t" style="left:105.80000000000001px;top:627.43px;font-size:10px;color:#3a3a3a;font-weight:normal;">Trail-Mix</div><svg style="position:absolute;left:59.5px;top:646.21px" width="7" height="10" viewBox="0 0 7 10"><path d="M1 0.8 L5.2 5 L1 9.2" fill="none" stroke="#5a5a5a" stroke-width="1.4"/></svg><svg style="position:absolute;left:70.90000000000003px;top:644.11px" width="13" height="14" viewBox="0 0 13 14"><path d="M6.5 1.3 L11.8 3.6 V8 L6.5 10.3 L1.2 8 V3.6 Z M1.2 3.6 L6.5 5.9 L11.8 3.6 M6.5 5.9 V10.3" fill="none" stroke="#444" stroke-width="1.15" stroke-linejoin="round"/><rect x="0" y="11" width="13" height="1.2" fill="#8cc63f"/></svg><div class="t" style="left:90.80000000000001px;top:646.35px;font-size:10px;color:#3a3a3a;font-weight:normal;">Kerne</div><svg style="position:absolute;left:59.5px;top:665.12px" width="7" height="10" viewBox="0 0 7 10"><path d="M1 0.8 L5.2 5 L1 9.2" fill="none" stroke="#5a5a5a" stroke-width="1.4"/></svg><svg style="position:absolute;left:70.90000000000003px;top:663.02px" width="13" height="14" viewBox="0 0 13 14"><path d="M6.5 1.3 L11.8 3.6 V8 L6.5 10.3 L1.2 8 V3.6 Z M1.2 3.6 L6.5 5.9 L11.8 3.6 M6.5 5.9 V10.3" fill="none" stroke="#444" stroke-width="1.15" stroke-linejoin="round"/><rect x="0" y="11" width="13" height="1.2" fill="#8cc63f"/></svg><div class="t" style="left:90.80000000000001px;top:665.25px;font-size:10px;color:#3a3a3a;font-weight:normal;">Saaten, Getreide, Sonstiges</div><svg style="position:absolute;left:59.5px;top:684.03px" width="7" height="10" viewBox="0 0 7 10"><path d="M1 0.8 L5.2 5 L1 9.2" fill="none" stroke="#5a5a5a" stroke-width="1.4"/></svg><svg style="position:absolute;left:70.90000000000003px;top:681.93px" width="13" height="14" viewBox="0 0 13 14"><path d="M6.5 1.3 L11.8 3.6 V8 L6.5 10.3 L1.2 8 V3.6 Z M1.2 3.6 L6.5 5.9 L11.8 3.6 M6.5 5.9 V10.3" fill="none" stroke="#444" stroke-width="1.15" stroke-linejoin="round"/><rect x="0" y="11" width="13" height="1.2" fill="#8cc63f"/></svg><div class="t" style="left:90.80000000000001px;top:684.16px;font-size:10px;color:#3a3a3a;font-weight:normal;">Trockenfrüchte</div><svg style="position:absolute;left:59.5px;top:702.94px" width="7" height="10" viewBox="0 0 7 10"><path d="M1 0.8 L5.2 5 L1 9.2" fill="none" stroke="#5a5a5a" stroke-width="1.4"/></svg><svg style="position:absolute;left:70.90000000000003px;top:700.84px" width="13" height="14" viewBox="0 0 13 14"><path d="M6.5 1.3 L11.8 3.6 V8 L6.5 10.3 L1.2 8 V3.6 Z M1.2 3.6 L6.5 5.9 L11.8 3.6 M6.5 5.9 V10.3" fill="none" stroke="#444" stroke-width="1.15" stroke-linejoin="round"/><rect x="0" y="11" width="13" height="1.2" fill="#8cc63f"/></svg><div class="t" style="left:90.80000000000001px;top:703.08px;font-size:10px;color:#3a3a3a;font-weight:normal;">Zucker</div></div></div><div style="position:absolute;left:396px;top:4px;width:1116px;height:711px;background:#fff"></div><div style="position:absolute;left:396px;top:39px;width:1116px;height:1px;background:#f0f0f0"></div><div style="position:absolute;left:396px;top:73.5px;width:1116px;height:1px;background:#f0f0f0"></div><div class="t" style="left:420px;top:17.54px;font-size:10px;color:#333;font-weight:normal;letter-spacing:0.077px;">Produkt</div><div class="t" style="left:467.5px;top:17.54px;font-size:10px;color:#333;font-weight:normal;letter-spacing:-0.013px;">Ansicht</div><div class="t" style="left:513px;top:17.54px;font-size:10px;color:#333;font-weight:normal;letter-spacing:-0.511px;">SDZeCOM Rules</div><div class="t" style="left:597px;top:17.54px;font-size:10px;color:#333;font-weight:normal;letter-spacing:-0.017px;">Export</div><div class="t" style="left:638.3px;top:17.54px;font-size:10px;color:#333;font-weight:normal;letter-spacing:0.096px;">Workflow</div><div class="t" style="left:693.4px;top:17.54px;font-size:10px;color:#333;font-weight:normal;letter-spacing:-0.109px;">Tools</div><div class="t" style="left:729.4px;top:17.54px;font-size:10px;color:#333;font-weight:normal;letter-spacing:-0.061px;">Hilfe</div><div class="t" style="right:12.799999999999955px;top:17.14px;font-size:10px;color:#666;font-weight:normal;letter-spacing:-0.3px">58259</div><svg style="position:absolute;left:421px;top:50.3px" width="13" height="13" viewBox="0 0 13 13"><path d="M7 1.8 H2.2 Q1 1.8 1 3 V10.4 Q1 11.6 2.2 11.6 H10 Q11.2 11.6 11.2 10.4 V6" fill="none" stroke="#333" stroke-width="1.6"/><path d="M5.5 7.5 L11.5 1.3" stroke="#333" stroke-width="1.8"/><path d="M4.6 8.5 L5 6.8 L6.3 8.1 Z" fill="#333"/></svg><svg style="position:absolute;left:447.8px;top:50.5px" width="12" height="13" viewBox="0 0 12 13"><path d="M3 5.3 A4.3 4.3 0 1 0 6 3.3" fill="none" stroke="#333" stroke-width="1.6"/><path d="M6.5 0.5 L3.5 3.3 L6.5 6 Z" fill="#333"/></svg><svg style="position:absolute;left:474.5px;top:50px" width="13" height="13" viewBox="0 0 13 13"><path d="M2 1 H8.5 L12 4.5 V11.9 Q12 12.6 11.3 12.6 H2.7 Q2 12.6 2 11.9 Z" fill="#fff" stroke="#555" stroke-width="0.9"/><path d="M8.5 1 V4.5 H12" fill="none" stroke="#888" stroke-width="0.8"/><rect x="0.3" y="2.3" width="5.6" height="1.7" rx="0.5" fill="#1e1e1e"/><rect x="3" y="6.4" width="7.2" height="2.6" fill="#9a9a9a"/><rect x="3" y="10" width="7.2" height="0.8" fill="#666"/></svg><svg style="position:absolute;left:501.5px;top:51.5px" width="13" height="11" viewBox="0 0 13 11"><rect x="4.2" y="0.7" width="4.6" height="2" rx="0.8" fill="none" stroke="#333" stroke-width="1.1"/><rect x="0.4" y="2.4" width="12.2" height="8.2" rx="0.6" fill="#333"/><rect x="0.4" y="4.3" width="12.2" height="1.1" fill="#fff"/><path d="M1.9 5.3 L2.9 6.9 L3.9 5.3 Z M9.1 5.3 L10.1 6.9 L11.1 5.3 Z" fill="#fff"/><rect x="0.4" y="7.6" width="12.2" height="0.5" fill="#555"/></svg><svg style="position:absolute;left:528px;top:50.2px" width="13.5" height="13.5" viewBox="0 0 13.5 13.5"><circle cx="6.75" cy="6.75" r="6.6" fill="#ff0000"/><path d="M3.6 6.9 L5.9 9.1 L10 4.6" fill="none" stroke="#fff" stroke-width="1.7"/></svg><svg style="position:absolute;left:553px;top:48.5px" width="13" height="13" viewBox="0 0 13 13"><circle cx="6.5" cy="6.5" r="6.3" fill="#333"/><path d="M3.4 6.6 L5.6 8.7 L9.7 4.3" fill="none" stroke="#fff" stroke-width="1.6"/></svg><svg style="position:absolute;left:576px;top:51px" width="12" height="11" viewBox="0 0 12 11"><path d="M2.6 3.5 V6.8 M5 8.6 H7.3" stroke="#d9d4ee" stroke-width="0.9"/><rect x="0.4" y="0.4" width="5.3" height="3.5" rx="0.6" fill="#6cbf00"/><rect x="0.4" y="6.9" width="5" height="3.5" rx="1.7" fill="#6cbf00"/><rect x="7.3" y="6.7" width="4" height="3.8" rx="0.4" fill="#6cbf00"/></svg><div class="t" style="left:421.6px;top:92.26px;font-size:17.3px;color:#333;font-weight:normal;letter-spacing:0.753px;-webkit-text-stroke:0.5px #333;">Studentenfutter</div><div class="t" style="left:1415.3px;top:97.21px;font-size:9.2px;color:#555;font-weight:normal;">DE</div><svg style="position:absolute;left:1440px;top:95px" width="13" height="15" viewBox="0 0 13 15"><g stroke="#333" stroke-width="1.3" fill="none"><path d="M0.5 2.5 H4.5 M8 2.5 H12.5 M0.5 7.5 H7.5 M11 7.5 H12.5 M0.5 12.5 H3.5 M7 12.5 H12.5"/><circle cx="6.2" cy="2.5" r="1.7"/><circle cx="9.2" cy="7.5" r="1.7"/><circle cx="5.2" cy="12.5" r="1.7"/></g></svg><div style="position:absolute;left:1463.4px;top:89px;width:23.6px;height:24px;background:#f1f1f1;border-radius:50%"></div><svg style="position:absolute;left:1471.5px;top:95.5px" width="8" height="11" viewBox="0 0 8 11"><path d="M6.3 1 L1.8 5.5 L6.3 10" fill="none" stroke="#333" stroke-width="1.6"/></svg><div class="t" style="left:421.2px;top:130.60px;font-size:9.8px;color:#444;font-weight:normal;letter-spacing:-0.024px;">Eigenschaften</div><div class="t" style="left:502.6px;top:130.60px;font-size:9.8px;color:#444;font-weight:normal;letter-spacing:0.104px;">Stammdaten</div><div class="t" style="left:578.8px;top:130.60px;font-size:9.8px;color:#444;font-weight:normal;letter-spacing:0.218px;">Marketingdaten</div><div class="t" style="left:669.2px;top:130.60px;font-size:9.8px;color:#444;font-weight:normal;letter-spacing:-0.097px;">Media-Assets</div><div class="t" style="left:746.8px;top:130.60px;font-size:9.8px;color:#444;font-weight:normal;letter-spacing:-0.247px;">Referenzen</div><div class="t" style="left:816px;top:130.60px;font-size:9.8px;color:#444;font-weight:normal;letter-spacing:0.236px;">Administration</div><div class="t" style="left:900.7px;top:130.60px;font-size:9.8px;color:#8cc63f;font-weight:normal;letter-spacing:0.152px;">Zutaten</div><div class="t" style="left:954px;top:130.60px;font-size:9.8px;color:#444;font-weight:normal;letter-spacing:0.017px;">Vorschau</div><div style="position:absolute;left:396px;top:147px;width:1116px;height:1px;background:#e9e9e9"></div><div style="position:absolute;left:891px;top:146.5px;width:54px;height:2px;background:#7cbd2a;border-radius:1px"></div><div style="position:absolute;left:568px;top:148px;width:823px;height:1px;background:#f1f1f1"></div><div style="position:absolute;left:568px;top:149px;width:823px;height:2px;background:linear-gradient(#dcdcdc,#d0d0d0)"></div><div style="position:absolute;left:1496.5px;top:148px;width:11.5px;height:567px;background:#f8f8f8"></div><div style="position:absolute;left:1508px;top:148px;width:4px;height:567px;background:#f1f1f1"></div><svg style="position:absolute;left:1498px;top:151.5px" width="8" height="6.5" viewBox="0 0 8 6.5"><path d="M4 0.3 L7.7 6 H0.3 Z" fill="#8a8a8a"/></svg><div style="position:absolute;left:1498.7px;top:386.8px;width:7.2px;height:320px;background:#8d8d8d;border-radius:4px"></div><div style="position:absolute;left:1498.7px;top:713px;width:7.2px;height:3px;background:#8d8d8d"></div><div class="t" style="left:422px;top:165.94px;font-size:10px;color:#505050;font-weight:normal;letter-spacing:0.050px;">Zutatenliste</div><div class="t" style="left:568.5px;top:165.94px;font-size:10px;color:#333;font-weight:normal;letter-spacing:-0.011px;">Zutaten: Nusskernmischung (veränderliche Gewichtsanteile) 94,8 % (Weinbeeren getrocknet; blanchierte</div><div class="t" style="left:1036px;top:165.94px;font-size:10px;color:#333;font-weight:normal;letter-spacing:0.048px;-webkit-text-stroke:0.38px #333;">Mandeln</div><div class="t" style="left:1075.3px;top:165.94px;font-size:10px;color:#333;font-weight:normal;">;</div><div class="t" style="left:1082px;top:165.94px;font-size:10px;color:#333;font-weight:normal;letter-spacing:-0.086px;-webkit-text-stroke:0.38px #333;">Cashewkerne</div><div class="t" style="left:1142.8px;top:165.94px;font-size:10px;color:#333;font-weight:normal;">;</div><div class="t" style="left:1149.1px;top:165.94px;font-size:10px;color:#333;font-weight:normal;letter-spacing:0.059px;-webkit-text-stroke:0.38px #333;">Walnusskerne</div><div class="t" style="left:1213.4px;top:165.94px;font-size:10px;color:#333;font-weight:normal;">;</div><div class="t" style="left:1220.2px;top:165.94px;font-size:10px;color:#333;font-weight:normal;letter-spacing:0.014px;-webkit-text-stroke:0.38px #333;">Haselnusskerne</div><div class="t" style="left:1292.6px;top:165.94px;font-size:10px;color:#333;font-weight:normal;letter-spacing:0.044px;">), Sonnenblumenöl</div><div class="t" style="left:422px;top:197.94px;font-size:10px;color:#505050;font-weight:normal;letter-spacing:0.157px;">Nährwerteeditor</div><div class="t" style="right:92.29999999999995px;top:196.53px;font-size:10px;color:#444;font-weight:normal;letter-spacing:-0.339px;">Suche:</div><div style="position:absolute;left:1268.4px;top:211.5px;width:153.5px;height:23px;box-sizing:border-box;border:1px solid #b5b5b5;border-radius:2px;background:#fff"></div><div style="position:absolute;left:1459px;top:191px;width:12px;height:237px;background:#fafafa"></div><svg style="position:absolute;left:1460.9px;top:196px" width="8" height="5" viewBox="0 0 8 5"><path d="M4 0.2 L7.6 4.8 H0.4 Z" fill="#8a8a8a"/></svg><div style="position:absolute;left:1462px;top:205.4px;width:7px;height:13.4px;background:#8d8d8d;border-radius:3.5px"></div><svg style="position:absolute;left:1460.9px;top:419px" width="8" height="6" viewBox="0 0 8 6"><path d="M0.4 0.5 H7.6 L4 5.5 Z" fill="#8a8a8a"/></svg><div class="t" style="left:576.8px;top:248.14px;font-size:10px;color:#3a3a3a;font-weight:normal;letter-spacing:0.429px;-webkit-text-stroke:0.38px #3a3a3a;">Nährwert</div><div class="t" style="left:916px;top:248.14px;font-size:10px;color:#3a3a3a;font-weight:normal;letter-spacing:0.146px;-webkit-text-stroke:0.38px #3a3a3a;">Einheit</div><div class="t" style="left:968.2px;top:248.14px;font-size:10px;color:#3a3a3a;font-weight:normal;letter-spacing:0.188px;-webkit-text-stroke:0.38px #3a3a3a;">Berechneter Wert</div><div class="t" style="left:1074.8px;top:248.14px;font-size:10px;color:#3a3a3a;font-weight:normal;letter-spacing:0.184px;-webkit-text-stroke:0.38px #3a3a3a;">Angepasster Wert</div><div class="t" style="left:1182.6px;top:248.14px;font-size:10px;color:#3a3a3a;font-weight:normal;letter-spacing:0.283px;-webkit-text-stroke:0.38px #3a3a3a;">Notiz</div><div style="position:absolute;left:568px;top:270px;width:852px;height:158px;overflow:hidden"><div style="position:absolute;left:0;top:0;width:852px;height:200px"><div style="position:absolute;left:0px;top:0px;width:852px;height:35px;background:#e3e3e3"></div><div class="t" style="left:9px;top:13.23px;font-size:10px;color:#3a3a3a;font-weight:normal;letter-spacing:0.197px;-webkit-text-stroke:0.38px #3a3a3a;">Zusammensetzung</div><div style="position:absolute;left:0px;top:34px;width:852px;height:26px;background:#f6f6f6"></div><div class="t" style="left:9.2px;top:43.14px;font-size:10px;color:#333;font-weight:normal;letter-spacing:-0.023px;">Energie (Kilokalorien)</div><div class="t" style="left:165px;width:400px;text-align:center;top:43.14px;font-size:10px;color:#333;font-weight:normal;">kcal</div><div class="t" style="right:362px;top:43.64px;font-size:9.4px;color:#333;font-weight:normal;">482,86600000000004</div><div class="t" style="right:255px;top:43.64px;font-size:9.4px;color:#2222ff;font-weight:normal;">482,86600000000004</div><div style="position:absolute;left:0px;top:60px;width:852px;height:26px;background:#fff"></div><div class="t" style="left:9.2px;top:69.13px;font-size:10px;color:#333;font-weight:normal;letter-spacing:-0.027px;">Energie (Kilojoule)</div><div class="t" style="left:165px;width:400px;text-align:center;top:69.13px;font-size:10px;color:#333;font-weight:normal;">kJ</div><div class="t" style="right:362px;top:69.64px;font-size:9.4px;color:#333;font-weight:normal;">2010,62192</div><div class="t" style="right:255px;top:69.64px;font-size:9.4px;color:#2222ff;font-weight:normal;">2010,62192</div><div style="position:absolute;left:0px;top:86px;width:852px;height:26px;background:#f6f6f6"></div><div class="t" style="left:9.2px;top:95.13px;font-size:10px;color:#333;font-weight:normal;letter-spacing:-0.017px;">Energie inkl. Energie aus Ballaststoffen (Kilokalorien)</div><div class="t" style="left:165px;width:400px;text-align:center;top:95.13px;font-size:10px;color:#333;font-weight:normal;">kcal</div><div class="t" style="right:362px;top:95.64px;font-size:9.4px;color:#333;font-weight:normal;">0</div><div style="position:absolute;left:0px;top:112px;width:852px;height:26px;background:#fff"></div><div class="t" style="left:9.2px;top:121.13px;font-size:10px;color:#333;font-weight:normal;letter-spacing:-0.020px;">Energie inkl. Energie aus Ballaststoffen (Kilojoule)</div><div class="t" style="left:165px;width:400px;text-align:center;top:121.13px;font-size:10px;color:#333;font-weight:normal;">kJ</div><div class="t" style="right:362px;top:121.64px;font-size:9.4px;color:#333;font-weight:normal;">0</div><div style="position:absolute;left:0px;top:138px;width:852px;height:26px;background:#f6f6f6"></div><div class="t" style="left:9.2px;top:147.13px;font-size:10px;color:#333;font-weight:normal;letter-spacing:-0.204px;">Wasser</div><div class="t" style="left:165px;width:400px;text-align:center;top:147.13px;font-size:10px;color:#333;font-weight:normal;">mg</div><div class="t" style="right:362px;top:147.64px;font-size:9.4px;color:#333;font-weight:normal;">8237,5</div><div class="t" style="right:255px;top:147.64px;font-size:9.4px;color:#2222ff;font-weight:normal;">8237,5</div><div style="position:absolute;left:0px;top:34px;width:852px;height:1px;background:#d9d9d9"></div><div style="position:absolute;left:0px;top:60px;width:852px;height:1px;background:#d9d9d9"></div><div style="position:absolute;left:0px;top:86px;width:852px;height:1px;background:#d9d9d9"></div><div style="position:absolute;left:0px;top:112px;width:852px;height:1px;background:#d9d9d9"></div><div style="position:absolute;left:0px;top:138px;width:852px;height:1px;background:#d9d9d9"></div><div style="position:absolute;left:0px;top:164px;width:852px;height:1px;background:#d9d9d9"></div><div style="position:absolute;left:0px;top:0px;width:852px;height:1px;background:#cfcfcf"></div><div style="position:absolute;left:0px;top:0px;width:1px;height:200px;background:#d5d5d5"></div><div style="position:absolute;left:851px;top:0px;width:1px;height:200px;background:#d5d5d5"></div><div style="position:absolute;left:339px;top:34px;width:1px;height:200px;background:#dadada"></div><div style="position:absolute;left:391px;top:34px;width:1px;height:200px;background:#dadada"></div><div style="position:absolute;left:498px;top:34px;width:1px;height:200px;background:#dadada"></div><div style="position:absolute;left:605px;top:34px;width:1px;height:200px;background:#dadada"></div></div></div><div class="t" style="left:422px;top:443.74px;font-size:10px;color:#505050;font-weight:normal;letter-spacing:0.081px;">Nährwertetabelle</div><div style="position:absolute;left:568px;top:437px;width:531px;height:1px;background:#3a3a3a"></div><div style="position:absolute;left:568px;top:453px;width:531px;height:1px;background:#3a3a3a"></div><div style="position:absolute;left:568px;top:469px;width:531px;height:1px;background:#3a3a3a"></div><div style="position:absolute;left:568px;top:484px;width:531px;height:1px;background:#3a3a3a"></div><div style="position:absolute;left:568px;top:500px;width:531px;height:1px;background:#3a3a3a"></div><div style="position:absolute;left:568px;top:516px;width:531px;height:1px;background:#3a3a3a"></div><div style="position:absolute;left:568px;top:531px;width:531px;height:1px;background:#3a3a3a"></div><div style="position:absolute;left:568px;top:547px;width:531px;height:1px;background:#3a3a3a"></div><div style="position:absolute;left:568px;top:563px;width:531px;height:1px;background:#3a3a3a"></div><div style="position:absolute;left:568px;top:578px;width:531px;height:1px;background:#3a3a3a"></div><div style="position:absolute;left:568px;top:437px;width:1px;height:142px;background:#3a3a3a"></div><div style="position:absolute;left:835px;top:437px;width:1px;height:142px;background:#3a3a3a"></div><div style="position:absolute;left:929px;top:437px;width:1px;height:142px;background:#3a3a3a"></div><div style="position:absolute;left:1098px;top:437px;width:1px;height:142px;background:#3a3a3a"></div><div class="t" style="left:570.6px;top:440.94px;font-size:10px;color:#333;font-weight:normal;letter-spacing:0.080px;">Nährwerte / Nutrients values</div><div class="t" style="left:836.8px;top:440.94px;font-size:10px;color:#333;font-weight:normal;letter-spacing:-0.055px;">pro 100 g / per 100 g</div><div class="t" style="left:931px;top:440.94px;font-size:10px;color:#333;font-weight:normal;letter-spacing:0.055px;">pro Portion (30 g) / per portion (30 g)</div><div class="t" style="left:570.6px;top:456.69px;font-size:10px;color:#333;font-weight:normal;letter-spacing:-0.012px;">Energie (Kilokalorien) / Energy (kilocalories)</div><div class="t" style="left:836.8px;top:456.69px;font-size:10px;color:#333;font-weight:normal;">483 kcal</div><div class="t" style="left:931px;top:456.69px;font-size:10px;color:#333;font-weight:normal;">145 kcal</div><div class="t" style="left:570.6px;top:472.44px;font-size:10px;color:#333;font-weight:normal;letter-spacing:-0.015px;">Energie (Kilojoule) / Energy (kilojoules)</div><div class="t" style="left:836.8px;top:472.44px;font-size:10px;color:#333;font-weight:normal;">2.011 kJ</div><div class="t" style="left:931px;top:472.44px;font-size:10px;color:#333;font-weight:normal;">603 kJ</div><div class="t" style="left:570.6px;top:488.19px;font-size:10px;color:#333;font-weight:normal;letter-spacing:0.045px;">Eiweiß (Protein) / Protein (protein)</div><div class="t" style="left:836.8px;top:488.19px;font-size:10px;color:#333;font-weight:normal;">12 g</div><div class="t" style="left:931px;top:488.19px;font-size:10px;color:#333;font-weight:normal;">3,7 g</div><div class="t" style="left:570.6px;top:503.94px;font-size:10px;color:#333;font-weight:normal;letter-spacing:-0.081px;">Fett / Fat</div><div class="t" style="left:836.8px;top:503.94px;font-size:10px;color:#333;font-weight:normal;">31 g</div><div class="t" style="left:931px;top:503.94px;font-size:10px;color:#333;font-weight:normal;">9,4 g</div><div class="t" style="left:570.6px;top:519.68px;font-size:10px;color:#333;font-weight:normal;letter-spacing:0.029px;">davon gesättigte Fettsäuren / of which saturated fatty acids</div><div class="t" style="left:836.8px;top:519.68px;font-size:10px;color:#333;font-weight:normal;">3,5 g</div><div class="t" style="left:931px;top:519.68px;font-size:10px;color:#333;font-weight:normal;">1,1 g</div><div class="t" style="left:570.6px;top:535.43px;font-size:10px;color:#333;font-weight:normal;letter-spacing:0.023px;">Kohlenhydrate / Carbohydrates, absorbable</div><div class="t" style="left:836.8px;top:535.43px;font-size:10px;color:#333;font-weight:normal;">34 g</div><div class="t" style="left:931px;top:535.43px;font-size:10px;color:#333;font-weight:normal;">10 g</div><div class="t" style="left:570.6px;top:551.18px;font-size:10px;color:#333;font-weight:normal;letter-spacing:0.007px;">davon Zucker / of which sugar</div><div class="t" style="left:836.8px;top:551.18px;font-size:10px;color:#333;font-weight:normal;">30 g</div><div class="t" style="left:931px;top:551.18px;font-size:10px;color:#333;font-weight:normal;">9,0 g</div><div class="t" style="left:570.6px;top:566.93px;font-size:10px;color:#333;font-weight:normal;letter-spacing:-0.229px;">Salz / Salt</div><div class="t" style="left:836.8px;top:566.93px;font-size:10px;color:#333;font-weight:normal;">0,04 g</div><div class="t" style="left:931px;top:566.93px;font-size:10px;color:#333;font-weight:normal;">0,01 g</div><div class="t" style="left:422px;top:595.74px;font-size:10px;color:#505050;font-weight:normal;letter-spacing:0.059px;">Allergenspuren Produkt</div><div class="t" style="left:422px;top:627.53px;font-size:10px;color:#505050;font-weight:normal;letter-spacing:0.046px;">Allergenspuren gesamt</div><div class="t" style="left:422px;top:659.03px;font-size:10px;color:#505050;font-weight:normal;letter-spacing:-0.121px;">Rezept Notiz</div>
</body></html>
